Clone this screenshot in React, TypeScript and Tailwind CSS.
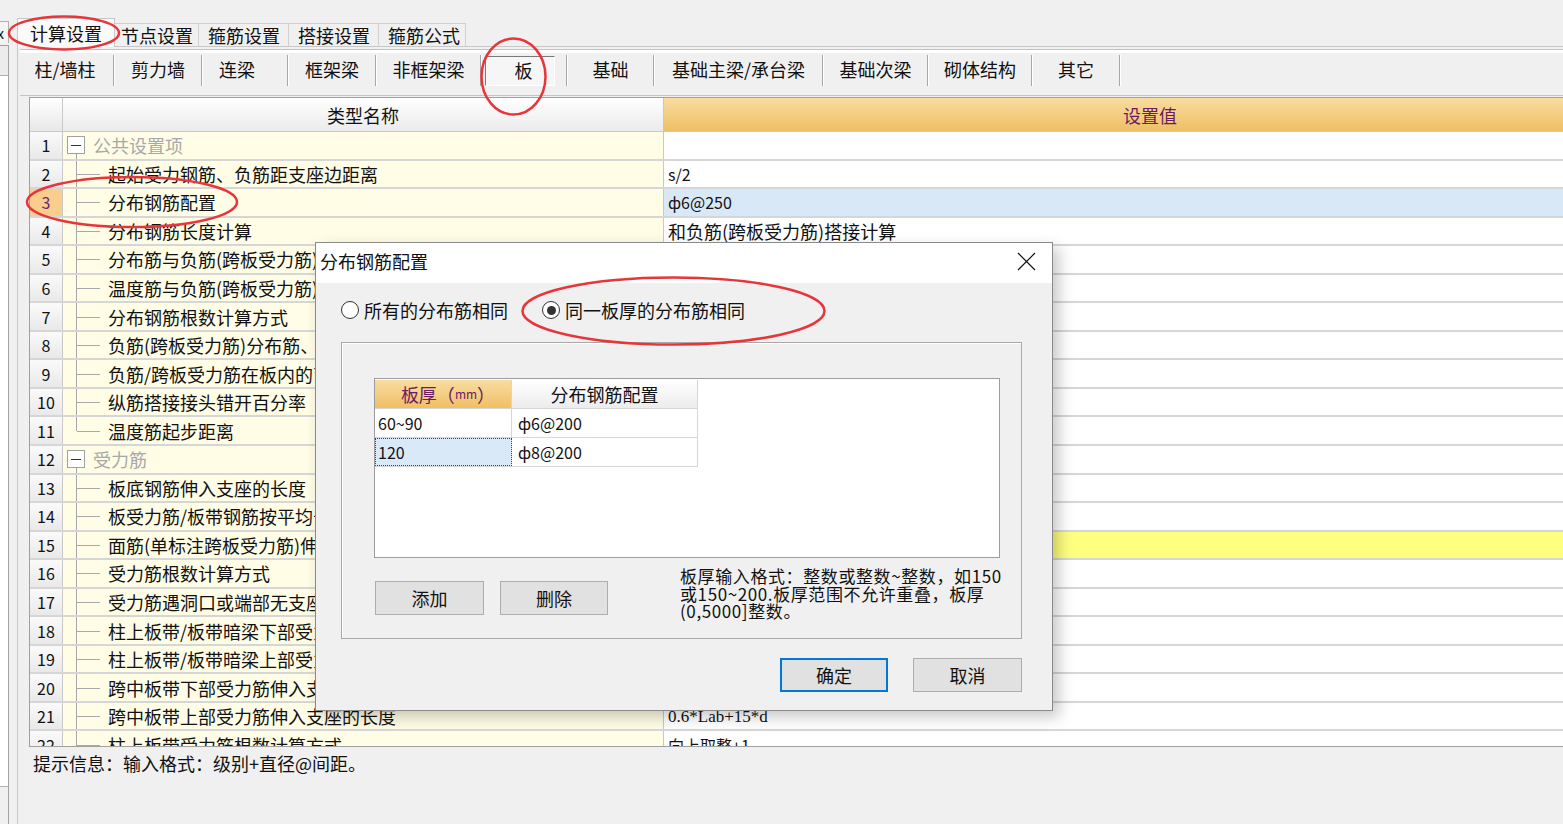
import React from "react";

type Row = {
  n: number;
  text: string;
  value?: string;
  group?: boolean;
  last?: boolean;
  sel?: boolean;
  hl?: boolean;
  big?: boolean;
  serif?: boolean;
};

const rows: Row[] = [
  { n: 1, text: "公共设置项", group: true },
  { n: 2, text: "起始受力钢筋、负筋距支座边距离", value: "s/2" },
  { n: 3, text: "分布钢筋配置", value: "ф6@250", sel: true },
  { n: 4, text: "分布钢筋长度计算", value: "和负筋(跨板受力筋)搭接计算", big: true },
  { n: 5, text: "分布筋与负筋(跨板受力筋)的搭接长度", value: "150" },
  { n: 6, text: "温度筋与负筋(跨板受力筋)的搭接长度", value: "ll" },
  { n: 7, text: "分布钢筋根数计算方式", value: "向下取整+1" },
  { n: 8, text: "负筋(跨板受力筋)分布筋、温度筋是否带弯勾", value: "否" },
  { n: 9, text: "负筋/跨板受力筋在板内的弯折长度", value: "板厚-2*保护层" },
  { n: 10, text: "纵筋搭接接头错开百分率", value: "50%" },
  { n: 11, text: "温度筋起步距离", value: "s", last: true },
  { n: 12, text: "受力筋", group: true },
  { n: 13, text: "板底钢筋伸入支座的长度", value: "max(ha/2,5*d)" },
  { n: 14, text: "板受力筋/板带钢筋按平均长度计算", value: "否" },
  { n: 15, text: "面筋(单标注跨板受力筋)伸入支座的锚固长度", value: "能直锚就直锚", hl: true },
  { n: 16, text: "受力筋根数计算方式", value: "向上取整+1" },
  { n: 17, text: "受力筋遇洞口或端部无支座时的弯折长度", value: "板厚-2*保护层" },
  { n: 18, text: "柱上板带/板带暗梁下部受力筋伸入支座的长度", value: "ha-bhc+15*d" },
  { n: 19, text: "柱上板带/板带暗梁上部受力筋伸入支座的长度", value: "0.6*Lab+15*d" },
  { n: 20, text: "跨中板带下部受力筋伸入支座的长度", value: "max(ha/2,12*d)" },
  { n: 21, text: "跨中板带上部受力筋伸入支座的长度", value: "0.6*Lab+15*d", serif: true },
  { n: 22, text: "柱上板带受力筋根数计算方式", value: "向上取整+1" },
];

const subTabs = [
  { label: "柱/墙柱", w: "w-[90px]", extra: "pr-[6px]" },
  { label: "剪力墙", w: "w-[86px]", extra: "" },
  { label: "连梁", w: "w-[84px]", extra: "pr-[16px]" },
  { label: "框架梁", w: "w-[86px]", extra: "" },
  { label: "非框架梁", w: "w-[103px]", extra: "" },
  { label: "板", w: "w-[84px]", extra: "", active: true },
  { label: "基础", w: "w-[85px]", extra: "" },
  { label: "基础主梁/承台梁", w: "w-[167px]", extra: "" },
  { label: "基础次梁", w: "w-[103px]", extra: "" },
  { label: "砌体结构", w: "w-[102px]", extra: "" },
  { label: "其它", w: "w-[86px]", extra: "" },
];

function Gutter({ row }: { row: Row }) {
  if (row.group) {
    return (
      <div className="relative h-full w-[30px] flex-none">
        <div className="absolute left-[4px] top-1/2 -mt-[9px] flex h-[18px] w-[18px] items-center justify-center border border-[#a0a0a0] bg-white">
          <div className="h-[1.5px] w-[10px] bg-[#333]" />
        </div>
        <div className="absolute bottom-0 left-[13px] top-[calc(50%+9px)] w-px bg-[#a8a8a8]" />
      </div>
    );
  }
  return (
    <div className="relative h-full w-[45px] flex-none">
      <div className={`absolute left-[13px] top-0 w-px bg-[#a8a8a8] ${row.last ? "h-1/2" : "h-[calc(100%+2px)]"}`} />
      <div className="absolute left-[14px] top-1/2 h-px w-[23px] bg-[#a8a8a8]" />
    </div>
  );
}

function Radio({ checked, label }: { checked?: boolean; label: string }) {
  return (
    <div className="flex items-center gap-[5px]">
      <div className="flex h-[18px] w-[18px] items-center justify-center rounded-full border border-[#333] bg-white">
        {checked && <div className="h-[9px] w-[9px] rounded-full bg-[#333]" />}
      </div>
      <span className="text-[18px] leading-[20px]">{label}</span>
    </div>
  );
}

function Dialog() {
  return (
    <div className="absolute left-[315px] top-[242px] flex h-[469px] w-[738px] flex-col border border-[#8a8a8a] bg-[#f0f0f0] shadow-[6px_6px_14px_rgba(0,0,0,0.22)]">
      {/* title bar */}
      <div className="flex h-[40px] flex-none items-center justify-between bg-white pb-[4px] pl-[4px] pr-[16px]">
        <span className="text-[18px] leading-[20px]">分布钢筋配置</span>
        <svg width="19" height="19" viewBox="0 0 19 19">
          <path d="M1 1 L18 18 M18 1 L1 18" stroke="#111" strokeWidth="1.2" />
        </svg>
      </div>

      {/* radios */}
      <div className="ml-[25px] mt-[18px] flex h-[18px] items-center">
        <Radio label="所有的分布筋相同" />
        <div className="w-[34px]" />
        <Radio checked label="同一板厚的分布筋相同" />
      </div>

      {/* group box */}
      <div className="ml-[25px] mt-[23px] h-[297px] w-[681px] border border-[#a9a9a9] shadow-[inset_1px_1px_0_#fff]">
        <div className="ml-[32px] mt-[35px] h-[180px] w-[626px] border border-[#9c9c9c] bg-white">
          <div className="mt-[1px] w-[323px]">
            <div className="flex h-[29px] border-b border-[#d6d6d6]">
              <div className="flex w-[137px] items-center justify-center border-r border-[#d6d6d6] bg-gradient-to-b from-[#f9dca0] to-[#efc064] pl-[10px] text-[#6b1a63]">
                <span className="text-[18px] leading-[20px]">板厚（</span>
                <span className="text-[12px] leading-[20px]">mm</span>
                <span className="text-[18px] leading-[20px]">）</span>
              </div>
              <div className="flex w-[186px] items-center justify-center border-r border-[#d6d6d6] bg-gradient-to-b from-white to-[#ececec] text-[18px] leading-[20px]">
                分布钢筋配置
              </div>
            </div>
            <div className="flex h-[29px] border-b border-[#d6d6d6] text-[16px] leading-[18px]">
              <div className="flex w-[137px] items-center border-r border-[#d6d6d6] pl-[3px]">60~90</div>
              <div className="flex w-[186px] items-center border-r border-[#d6d6d6] pl-[6px]">ф6@200</div>
            </div>
            <div className="flex h-[29px] border-b border-[#d6d6d6] text-[16px] leading-[18px]">
              <div className="flex w-[137px] items-center border border-dotted border-[#444] bg-[#d9e9f8] pl-[2px]">120</div>
              <div className="flex w-[186px] items-center border-r border-[#d6d6d6] pl-[6px]">ф8@200</div>
            </div>
          </div>
        </div>

        <div className="ml-[33px] mt-[9px] flex items-start">
          <button className="mt-[14px] h-[34px] w-[109px] border border-[#adadad] bg-[#e1e1e1] text-[18px] leading-[20px]">添加</button>
          <button className="ml-[16px] mt-[14px] h-[34px] w-[108px] border border-[#adadad] bg-[#e1e1e1] text-[18px] leading-[20px]">删除</button>
          <div className="ml-[72px] whitespace-nowrap text-[17px] leading-[17.5px] tracking-[0.6px]">
            板厚输入格式：整数或整数~整数，如150
            <br />
            或150~200.板厚范围不允许重叠，板厚
            <br />
            (0,5000]整数。
          </div>
        </div>
      </div>

      {/* ok / cancel */}
      <div className="mr-[30px] mt-[19px] flex justify-end gap-[25px]">
        <button className="h-[34px] w-[108px] border-2 border-[#0078d7] bg-[#e1e1e1] text-[18px] leading-[20px]">确定</button>
        <button className="h-[34px] w-[109px] border border-[#adadad] bg-[#e1e1e1] text-[18px] leading-[20px]">取消</button>
      </div>
    </div>
  );
}

function Annotations() {
  return (
    <svg className="pointer-events-none absolute inset-0 z-30" width="1563" height="824">
      <g fill="none" stroke="#e8353a" strokeWidth="2.5">
        <ellipse cx="64" cy="33" rx="55" ry="16.5" />
        <ellipse cx="513.5" cy="76.5" rx="32" ry="38" />
        <ellipse cx="132" cy="202" rx="105" ry="25" />
        <ellipse cx="673.5" cy="311" rx="151" ry="33.5" />
      </g>
    </svg>
  );
}

export default function App() {
  return (
    <div className="relative flex h-[824px] w-[1563px] overflow-hidden bg-[#f0f0f0] font-['Noto_Sans_CJK_SC',sans-serif] text-[#111]">
      {/* left docked panel edge */}
      <div className="flex w-[17px] flex-none flex-col">
        <div className="h-[21px]" />
        <div className="flex h-[22px] w-[9px] items-center overflow-hidden border-r border-t border-[#b0b0b0] bg-[#f4f4f4] text-[14px] leading-none">
          <span className="-ml-[3px]">x</span>
        </div>
        <div className="h-[2px]" />
        <div className="flex w-[9px] flex-1 flex-col border-r border-t border-[#a0a0a0]">
          <div className="h-[30px] border-b border-[#b0b0b0] bg-[#ececec]" />
          <div className="h-[711px] border-b border-[#b0b0b0] bg-white" />
          <div className="flex-1 bg-[#f0f0f0]" />
        </div>
      </div>

      <div className="flex min-w-0 flex-1 flex-col">
        {/* main tabs */}
        <div className="flex h-[46px] flex-none items-end">
          <div className="relative z-10 flex h-[29px] w-[98px] translate-y-px items-center justify-center border border-b-0 border-[#c8c8c8] bg-[#fafafa] text-[18px] leading-[20px]">
            计算设置
          </div>
          {["节点设置", "箍筋设置", "搭接设置", "箍筋公式"].map((t, i) => (
            <div
              key={t}
              className={`flex h-[23px] items-center border border-b-0 border-l-0 border-[#d0d0d0] bg-[#f0f0f0] pl-[6px] text-[18px] leading-[20px] ${
                i === 0 ? "w-[84px]" : i === 3 ? "w-[87px] pl-[9px]" : "w-[90px] pl-[9px]"
              }`}
            >
              {t}
            </div>
          ))}
        </div>

        {/* tab panel */}
        <div className="flex min-h-0 flex-1 flex-col border-l border-t border-[#c8c8c8]">
          {/* sub tabs */}
          <div className="ml-[2px] mt-[2px] flex-none border-b border-t border-[#c4c4c4]">
            <div className="h-[3px] bg-white" />
            <div className="flex h-[42px] items-start pl-[3px] pt-[2px]">
              {subTabs.map((s) => (
                <React.Fragment key={s.label}>
                  <div className={`flex h-[31px] flex-none items-center justify-center pb-[3px] ${s.w}`}>
                    {s.active ? (
                      <div className="mr-[8px] mt-[3px] flex h-[30px] w-[70px] items-center justify-center border border-b-white border-l-[#7a7a7a] border-r-white border-t-[#7a7a7a] bg-[#f6f6f6] pb-[2px] pl-[7px] text-[18px] leading-[20px]">
                        板
                      </div>
                    ) : (
                      <span className={`text-[18px] leading-[20px] ${s.extra}`}>{s.label}</span>
                    )}
                  </div>
                  <div className="flex h-[31px] w-[2px] flex-none">
                    <div className="w-px bg-[#a8a8a8]" />
                    <div className="w-px bg-white" />
                  </div>
                </React.Fragment>
              ))}
            </div>
          </div>

          {/* grid */}
          <div className="ml-[11px] mt-[1px] flex h-[650px] flex-none flex-col overflow-hidden border border-r-0 border-[#a0a0a0]">
            <div className="flex h-[34px] flex-none border-b border-[#c8c8c8]">
              <div className="w-[33px] flex-none border-r border-[#c8c8c8] bg-gradient-to-b from-white to-[#e8e8e8]" />
              <div className="flex w-[601px] flex-none items-center justify-center border-r border-[#c8c8c8] bg-gradient-to-b from-white to-[#ebebeb] text-[18px] leading-[20px]">
                类型名称
              </div>
              <div className="flex w-[972px] flex-none items-center justify-center bg-gradient-to-b from-[#f9dca0] to-[#efc062] text-[18px] leading-[20px] text-[#6b1a63]">
                设置值
              </div>
            </div>
            {rows.map((r) => (
              <div key={r.n} className="flex h-[28.55px] flex-none border-b-2 border-[#d6d6d6]">
                <div
                  className={`flex w-[33px] flex-none items-center justify-center border-r border-[#c8c8c8] text-[16px] leading-none ${
                    r.sel ? "bg-[#f9cd8c] text-[#6b2a7a]" : "bg-gradient-to-b from-[#fafafa] to-[#e9e9e9]"
                  }`}
                >
                  {r.n}
                </div>
                <div className="flex w-[601px] flex-none items-center overflow-hidden whitespace-nowrap border-r border-[#c8c8c8] bg-[#fffde6]">
                  <Gutter row={r} />
                  <span className={`text-[18px] leading-[20px] ${r.group ? "text-[#a8a8a8]" : ""}`}>{r.text}</span>
                </div>
                <div
                  className={`flex w-[972px] flex-none items-center whitespace-nowrap pl-[4px] ${
                    r.sel ? "bg-[#d9e8f7]" : r.hl ? "bg-[#ffff80]" : "bg-white"
                  } ${r.big ? "text-[18px] leading-[20px]" : r.serif ? "font-['Liberation_Serif',serif] text-[17px] leading-none" : "text-[16px] leading-none"}`}
                >
                  {r.value}
                </div>
              </div>
            ))}
          </div>

          {/* status */}
          <div className="flex h-[32px] flex-none items-center pl-[15px] text-[18px] leading-[20px]">
            提示信息：输入格式：级别+直径@间距。
          </div>
        </div>
      </div>

      <Dialog />
      <Annotations />
    </div>
  );
}
